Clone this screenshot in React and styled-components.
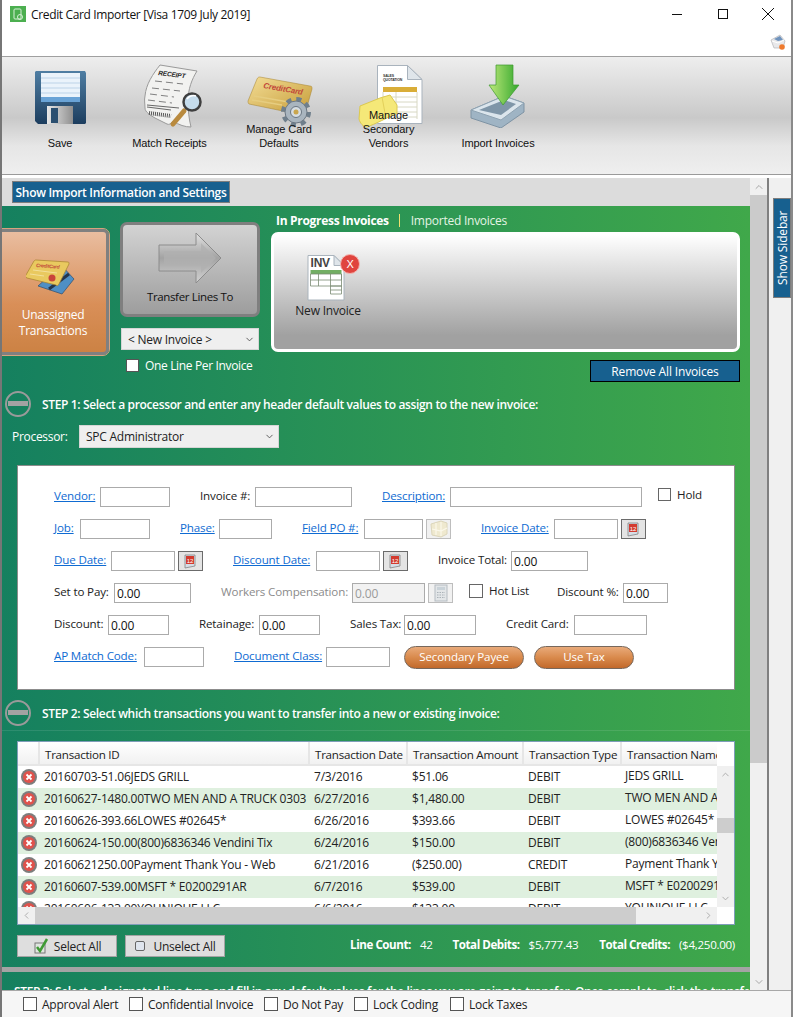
import React from "react";
import styled, { createGlobalStyle } from "styled-components";
import { ChevronUp, ChevronDown, ChevronLeft, ChevronRight } from "lucide-react";

const FONT = `"Open Sans", "Noto Sans", sans-serif`;

const Global = createGlobalStyle`
  html, body { margin: 0; padding: 0; background: #fff; }
  * { box-sizing: border-box; }
`;

const Win = styled.div`
  width: 793px;
  height: 1017px;
  display: flex;
  flex-direction: column;
  overflow: hidden;
  border-left: 2px solid #767676;
  border-right: 2px solid #8a8a8a;
  background: #fff;
  font-family: ${FONT};
  font-size: 11.5px;
  letter-spacing: -0.15px;
  color: #222;
`;

/* title bar */
const TitleBar = styled.div`
  height: 57px;
  flex: none;
  border-bottom: 1px solid #a0a0a0;
  background: #fff;
  display: flex;
  flex-direction: column;
`;
const TitleRow = styled.div`
  display: flex;
  align-items: center;
  height: 28px;
  padding-left: 8px;
`;
const TitleText = styled.div`
  margin-left: 5px;
  font-size: 12px;
  letter-spacing: -0.35px;
  color: #111;
  flex: 1;
`;
const WinBtn = styled.div`
  width: 45.5px;
  height: 28px;
  display: flex;
  align-items: center;
  justify-content: center;
`;
const PrinterRow = styled.div`
  display: flex;
  justify-content: flex-end;
  padding: 6px 5px 0 0;
`;

/* ribbon */
const Ribbon = styled.div`
  height: 118px;
  flex: none;
  padding: 7px 0 0 3px;
  display: flex;
  border-bottom: 1px solid #9a9a9a;
  background: linear-gradient(#eeeeee 0%, #c9c9c9 52%, #e6e6e6 76%, #efefef 100%);
`;
const RibbonItem = styled.div`
  width: 109.5px;
  height: 86px;
  flex: none;
  display: grid;
  justify-items: center;
  & > * { grid-area: 1 / 1; }
`;
const RibbonLabel = styled.div`
  align-self: end;
  text-align: center;
  font-family: "Liberation Sans", Arial, sans-serif;
  font-size: 11px;
  letter-spacing: -0.1px;
  line-height: 14px;
  color: #111;
  position: relative;
  max-width: 84px;
`;

/* body */
const Body = styled.div`
  flex: 1;
  min-height: 0;
  display: flex;
  padding-top: 3px;
  background: #fff;
  overflow: hidden;
`;
const Main = styled.div`
  width: 748px;
  flex: none;
  overflow: hidden;
  display: flex;
  flex-direction: column;
`;
const TopStrip = styled.div`
  height: 28px;
  flex: none;
  background: #dcdcdc;
  padding: 3px 0 0 10px;
`;
const BlueBtn = styled.div`
  display: inline-flex;
  align-items: center;
  justify-content: center;
  height: 22px;
  width: 218px;
  background: #17608f;
  border: 1px solid #7d7d7d;
  color: #fff;
  font-weight: 600;
  font-size: 12px;
  letter-spacing: -0.3px;
  white-space: nowrap;
`;
const Green = styled.div`
  flex: 1;
  min-height: 0;
  overflow: hidden;
  background: linear-gradient(90deg, #15805f 0%, #40a84a 100%);
  color: #fff;
`;

const Top = styled.div`
  height: 185px;
  display: flex;
  align-items: flex-start;
`;
const Tile = styled.div`
  width: 107px;
  height: 126px;
  margin-top: 23px;
  flex: none;
  border: 3px solid #808080;
  border-left: 0;
  border-radius: 0 6px 6px 0;
  outline: 1px solid #d8a27e;
  background: linear-gradient(#e9bda0 0%, #d98f58 60%, #cc8244 100%);
  display: flex;
  flex-direction: column;
  align-items: center;
  padding: 26px 2px 0 0;
  color: #fff;
  font-size: 12px;
  letter-spacing: -0.25px;
  line-height: 16px;
  text-align: center;
`;
const TileLabel = styled.div`
  margin-top: 9px;
`;
const MidCol = styled.div`
  width: 140px;
  margin: 16px 0 0 11px;
  flex: none;
  display: flex;
  flex-direction: column;
  align-items: center;
`;
const Transfer = styled.div`
  width: 140px;
  height: 95px;
  border: 3px solid #7f7f7f;
  border-radius: 7px;
  background: linear-gradient(#d3d3d3, #9d9d9d);
  color: #111;
  font-size: 11.5px;
  letter-spacing: -0.35px;
  display: flex;
  flex-direction: column;
  align-items: center;
  padding-top: 7px;
`;
const TransferLabel = styled.div`
  margin-top: 5px;
`;
const Select = styled.div`
  width: ${(p) => p.$w}px;
  height: ${(p) => p.$h || 22}px;
  margin-top: ${(p) => p.$mt || 0}px;
  flex: none;
  background: #efefef;
  border: 1px solid #d6d6d6;
  color: #222;
  font-size: 12px;
  letter-spacing: -0.25px;
  display: flex;
  align-items: center;
  justify-content: space-between;
  padding: 0 3px 0 6px;
`;
const Check = styled.span`
  display: inline-block;
  width: ${(p) => p.$s || 14}px;
  height: ${(p) => p.$s || 14}px;
  flex: none;
  background: #fff;
  border: 1px solid #555;
`;
const OneLine = styled.div`
  display: flex;
  align-items: center;
  align-self: flex-start;
  gap: 6px;
  margin: 9px 0 0 6px;
  font-size: 12px;
  letter-spacing: -0.35px;
  line-height: 13px;
  color: #fff;
`;
const RightCol = styled.div`
  width: 469px;
  margin-left: 11px;
  flex: none;
  padding-top: 6px;
  display: flex;
  flex-direction: column;
`;
const Tabs = styled.div`
  display: flex;
  align-items: center;
  height: 16px;
  padding-left: 5px;
  font-size: 12px;
`;
const ActiveTab = styled.span`
  font-weight: 700;
  letter-spacing: -0.3px;
`;
const TabSep = styled.span`
  width: 1px;
  height: 13px;
  background: #f0e070;
  margin: 0 11px 0 10px;
`;
const InvoiceTab = styled.span`
  color: #e4f4e4;
  letter-spacing: -0.25px;
`;
const InvoicePanel = styled.div`
  height: 120px;
  margin-top: 4px;
  border: 3px solid #fff;
  border-radius: 7px;
  background: linear-gradient(#ffffff 0%, #a1a1a1 88%);
  padding: 19px 0 0 19px;
  color: #222;
`;
const InvoiceItem = styled.div`
  width: 70px;
  display: flex;
  flex-direction: column;
  align-items: center;
  font-size: 12px;
  letter-spacing: -0.2px;
`;
const InvoiceLabel = styled.div`
  margin-top: 0;
  white-space: nowrap;
`;
const RemoveBtn = styled.div`
  align-self: flex-end;
  width: 150px;
  height: 22px;
  margin-top: 8px;
  background: #17608f;
  border: 1px solid #000;
  color: #fff;
  font-size: 12px;
  display: flex;
  align-items: center;
  justify-content: center;
`;

const Step = styled.div`
  display: flex;
  align-items: center;
  height: 26px;
  padding-left: 2px;
  font-weight: 600;
  font-size: 12px;
  letter-spacing: -0.35px;
  white-space: nowrap;
  color: #fff;
`;
const StepText = styled.div`
  margin-left: 10px;
  padding-top: 1px;
`;
const Processor = styled.div`
  display: flex;
  align-items: center;
  margin-top: 8px;
  padding-left: 10px;
  font-size: 12px;
`;
const ProcLabel = styled.div`
  width: 67px;
  letter-spacing: -0.3px;
`;

/* header form */
const Form = styled.div`
  width: 718px;
  height: 225px;
  margin: 17px 0 10px 15px;
  background: #fff;
  border: 1px solid #8c8c8c;
  color: #222;
  padding: 21px 0 0 36px;
  display: flex;
  flex-direction: column;
  gap: 12px;
`;
const Row = styled.div`
  display: flex;
  align-items: center;
  height: 20px;
  font-size: 11.6px;
`;
const Label = styled.div`
  flex: none;
  width: ${(p) => p.$w}px;
  margin-left: ${(p) => p.$ml ?? 30}px;
  margin-bottom: ${(p) => (p.$up ? 6 : 4)}px;
  white-space: nowrap;
  color: ${(p) => (p.$off ? "#8b8b8b" : "#222")};
  &:first-child { margin-left: 0; }
`;
const LinkLabel = styled(Label)`
  color: #0f6bd2;
  text-decoration: underline;
`;
const Field = styled.input`
  flex: none;
  width: ${(p) => p.$w}px;
  height: 20px;
  margin: 0;
  padding: 0 2px;
  border: 1px solid #ababab;
  border-radius: 0;
  background: ${(p) => (p.disabled ? "#f2f2f2" : "#fff")};
  color: ${(p) => (p.disabled ? "#9a9a9a" : "#111")};
  font: 12px ${FONT};
  letter-spacing: -0.15px;
  outline: none;
`;
const IconBtn = styled.div`
  flex: none;
  width: 25px;
  height: 20px;
  margin-left: 3px;
  display: flex;
  align-items: center;
  justify-content: center;
  background: ${(p) => (p.$off ? "#f1f1f1" : "#e4e4e4")};
  border: 1px solid ${(p) => (p.$off ? "#bdbdbd" : "#6b6b6b")};
`;
const FormCheck = styled(Check)`
  margin-left: ${(p) => p.$ml}px;
  margin-bottom: 5px;
  border-color: #666;
`;
const Pill = styled.div`
  flex: none;
  width: ${(p) => p.$w}px;
  height: 23px;
  margin-left: ${(p) => p.$ml}px;
  padding-bottom: 1px;
  border-radius: 12px;
  border: 1px solid #77685c;
  background: linear-gradient(#e9aa7a 0%, #d98a4c 50%, #c2692b 100%);
  color: #fff;
  font-size: 11.6px;
  display: flex;
  align-items: center;
  justify-content: center;
`;

const StepRule = styled.div`
  height: 1px;
  margin-top: 4px;
  background: rgba(255, 255, 255, 0.1);
`;

/* transactions table */
const Table = styled.div`
  width: 718px;
  height: 184px;
  margin: 10px 0 0 15px;
  background: #fff;
  border: 1px solid #7f9db9;
  color: #222;
  display: flex;
  flex-direction: column;
  font-size: 12px;
  letter-spacing: -0.2px;
`;
const Head = styled.div`
  height: 24px;
  flex: none;
  display: flex;
  font-size: 11.6px;
  letter-spacing: -0.25px;
`;
const HeadCell = styled.div`
  flex: none;
  width: ${(p) => p.$w}px;
  padding: 2px 0 0 5px;
  display: flex;
  align-items: center;
  white-space: nowrap;
  overflow: hidden;
  background: linear-gradient(#ffffff, #f1f1f1);
  border-right: 2px solid #e6e6e6;
  border-bottom: 2px solid #e6e6e6;
  &:last-child { border-right: 0; }
`;
const Mid = styled.div`
  flex: 1;
  min-height: 0;
  display: flex;
`;
const Rows = styled.div`
  width: 699px;
  flex: none;
  overflow: hidden;
`;
const TxRow = styled.div`
  height: 22px;
  display: flex;
  align-items: center;
  white-space: nowrap;
  background: ${(p) => (p.$alt ? "#dff0df" : "#fff")};
`;
const Gutter = styled.div`
  width: 22px;
  flex: none;
  display: flex;
  justify-content: center;
`;
const Cell = styled.div`
  flex: none;
  width: ${(p) => p.$w}px;
  padding-left: ${(p) => (p.$up ? 3 : 4)}px;
  margin-bottom: ${(p) => (p.$up ? 4 : 2)}px;
  overflow: hidden;
`;
const VBar = styled.div`
  width: 17px;
  flex: none;
  background: #f0f0f0;
  display: flex;
  flex-direction: column;
  align-items: center;
  justify-content: space-between;
  padding: 3px 0;
`;
const VSpacer = styled.div`
  align-self: stretch;
  height: 15px;
  margin-top: 38px;
  margin-bottom: auto;
  background: #cdcdcd;
`;
const HBar = styled.div`
  height: 17px;
  flex: none;
  display: flex;
`;
const HTrack = styled.div`
  width: 699px;
  display: flex;
  align-items: center;
  background: #f0f0f0;
`;
const ArrowCap = styled.div`
  width: 17px;
  flex: none;
  height: 17px;
  margin-left: ${(p) => (p.$end ? "auto" : "0")};
  display: flex;
  align-items: center;
  justify-content: center;
`;
const HThumb = styled.div`
  width: 601px;
  height: 17px;
  background: #cdcdcd;
`;
const Corner = styled.div`
  flex: 1;
  background: #fff;
`;

const Footer = styled.div`
  display: flex;
  align-items: center;
  width: 718px;
  height: 22px;
  margin: 10px 0 10px 15px;
`;
const GrayBtn = styled.div`
  width: 100px;
  height: 22px;
  flex: none;
  margin-right: 8px;
  background: #dedede;
  border: 1px solid #a4a4a4;
  color: #222;
  font-size: 12px;
  letter-spacing: -0.25px;
  display: flex;
  align-items: center;
  justify-content: center;
  gap: ${(p) => p.$gap}px;
`;
const Stats = styled.div`
  margin-left: auto;
  display: flex;
  font-size: 11.6px;
  letter-spacing: -0.3px;
  white-space: nowrap;
  margin-bottom: 3px;
`;
const StatLabel = styled.span`
  font-weight: 700;
  letter-spacing: -0.45px;
  margin: 0 9px 0 ${(p) => p.$ml || 0}px;
`;
const GrayBar = styled.div`
  height: 5px;
  background: #a4a4a4;
  margin-bottom: 6px;
`;

/* main scroll bar and side strip */
const MainBar = styled.div`
  width: 17px;
  flex: none;
  display: flex;
  flex-direction: column;
  background: #f0f0f0;
`;
const MainCap = styled.div`
  height: 17px;
  flex: none;
  display: flex;
  align-items: center;
  justify-content: center;
`;
const MainThumb = styled.div`
  height: 568px;
  flex: none;
  background: #cbcbcb;
`;
const MainTrack = styled.div`
  flex: 1;
`;
const Side = styled.div`
  flex: 1;
  border-left: 2px solid #808080;
  background: #f0f0f0;
  padding: 20px 0 0 4px;
`;
const SideBtn = styled.div`
  width: 18px;
  height: 100px;
  background: #17608f;
  border: 1px solid #7d7d7d;
  color: #fff;
  font-size: 12px;
  writing-mode: vertical-rl;
  transform: rotate(180deg);
  display: flex;
  align-items: center;
  justify-content: center;
`;

/* bottom options */
const Bottom = styled.div`
  height: 27px;
  flex: none;
  border-top: 1px solid #a8a8a8;
  background: #f6f6f6;
  display: flex;
  align-items: center;
  padding-left: 21px;
  font-size: 12px;
  letter-spacing: -0.25px;
`;
const BottomOpt = styled.div`
  display: flex;
  align-items: center;
  gap: 5px;
  width: ${(p) => p.$w}px;
  flex: none;
  white-space: nowrap;
`;

/* drawings */
const FloppyIcon = () => (
  <svg width="110" height="64" viewBox="5 64 110 64">
    <defs>
      <linearGradient id="fl" x1="0" y1="0" x2="0" y2="1">
        <stop offset="0" stopColor="#4f7ea3" />
        <stop offset="1" stopColor="#1c3d5e" />
      </linearGradient>
      <linearGradient id="sh" x1="0" y1="0" x2="1" y2="0">
        <stop offset="0" stopColor="#e8e8e8" />
        <stop offset="1" stopColor="#8f8f8f" />
      </linearGradient>
    </defs>
    <path d="M36 71h49l1 2v50l-1 1H38l-3-3V72z" fill="url(#fl)" />
    <rect x="41" y="73" width="39" height="28" fill="#eaf3fb" />
    <path d="M41 78h39M41 83h39M41 88h39M41 93h39" stroke="#bcd3e8" strokeWidth="1" />
    <rect x="41" y="97" width="39" height="5" fill="#69a3d6" />
    <rect x="47" y="106" width="26" height="18" fill="url(#sh)" />
    <rect x="51" y="108" width="7" height="15" fill="#2b4f70" />
  </svg>
);

const ReceiptIcon = () => (
  <svg width="110" height="64" viewBox="115 64 110 64">
    <path d="M160 65l37 6c-5 8-9 18-9 30 0 10 1 18 3 26-6 0-12-2-18-6-2 3-4 4-6 3-4-2-8-4-12-6-5-3-10-6-10-10 0-4-1-8 0-12 1-12 8-22 15-31z" fill="#f2f2f0" stroke="#9a9a9a" />
    <text x="158" y="75" fontFamily="Liberation Sans" fontSize="6.500" fontWeight="700" fontStyle="italic" fill="#222" transform="rotate(7 158 75)">RECEIPT</text>
    <path d="M155 81l28 3M152 88l28 3M150 94l24 3M148 100l24 3" stroke="#808080" strokeWidth="1" strokeDasharray="7 4" />
    <path d="M147 105l32 3M147 107l24 3" stroke="#444" strokeWidth=".8" />
    <path d="M149 113l22 3" stroke="#555" strokeWidth="4" strokeDasharray="1 1" />
    <path d="M173 124l11-13" stroke="#b98a3e" strokeWidth="5" strokeLinecap="round" />
    <circle cx="192" cy="102" r="8.500" fill="#c5dcec" stroke="#3f3f3f" strokeWidth="2.500" />
    <path d="M187 99c2-3 6-4 9-3" stroke="#fff" strokeWidth="1.500" fill="none" />
  </svg>
);

const CardGearIcon = () => (
  <svg width="110" height="64" viewBox="224 64 110 64">
    <defs>
      <linearGradient id="gd" x1="0" y1="0" x2="1" y2="1">
        <stop offset="0" stopColor="#f3dd96" />
        <stop offset="1" stopColor="#c59b36" />
      </linearGradient>
    </defs>
    <path d="M260 77l50 9c2 0 2 1 2 3l-7 25c-1 1-1 1-3 1l-53-11c-1-1-1-2-1-3l9-22c1-2 2-2 3-2z" fill="url(#gd)" stroke="#a5812c" strokeWidth=".5" />
    <text x="263" y="88" fontFamily="Liberation Sans" fontSize="8" fontStyle="italic" fontWeight="700" fill="#c2483a" transform="rotate(10 263 88)">CreditCard</text>
    <path d="M254 96l46 8M252 100l30 5" stroke="#e6cd80" strokeWidth="1.500" />
    <circle cx="296" cy="112" r="12.500" fill="none" stroke="#6f7f8c" strokeWidth="5" strokeDasharray="5 4.800" />
    <circle cx="296" cy="112" r="11" fill="#a9b5bf" stroke="#6b7783" />
    <circle cx="296" cy="112" r="5.500" fill="#d6dde2" stroke="#6b7783" />
    <circle cx="296" cy="112" r="2.500" fill="#c9a64e" />
  </svg>
);

const QuoteIcon = () => (
  <svg width="110" height="64" viewBox="332 64 110 64">
    <path d="M375.500 65.500h30l14.500 14v44h-44.500z" fill="#fff" stroke="#a9b3bd" />
    <path d="M405.500 65.500v14h14.500z" fill="#dfe5ea" stroke="#a9b3bd" />
    <text x="381" y="77" fontFamily="Liberation Sans" fontSize="3.500" fontWeight="700" fill="#333">SALES</text>
    <text x="381" y="81" fontFamily="Liberation Sans" fontSize="3.500" fontWeight="700" fill="#333">QUOTATION</text>
    <rect x="381" y="87" width="34" height="5" fill="#d9ad38" />
    <path d="M381 97h34M381 102h34M381 107h34M381 112h34M381 117h34M394 92v27M381 92v27M415 92v27" stroke="#d8d8c4" strokeWidth="1" />
    <path d="M358 106l20-8 10-3 7 10v8c-10 5-22 11-30 14-4 0-7-4-8-8z" fill="#f5e878" stroke="#dcc94f" />
    <path d="M380 97l3 16" stroke="#e3d05a" />
  </svg>
);

const ImportIcon = () => (
  <svg width="110" height="64" viewBox="442 64 110 64">
    <defs>
      <linearGradient id="ar" x1="0" y1="0" x2="1" y2="0">
        <stop offset="0" stopColor="#bde87a" />
        <stop offset="1" stopColor="#34a82d" />
      </linearGradient>
    </defs>
    <path d="M470 110l33-14 20 7v9l-23 16-30-10z" fill="#9fb4c4" stroke="#7e93a4" />
    <path d="M470 110l30 10 23-17-20-7z" fill="#dbe5ec" stroke="#8fa3b2" />
    <path d="M478 110l25-10 12 4-15 11z" fill="#7f96a8" />
    <path d="M495 65h17v20h6l-16 20-14-20h7z" fill="url(#ar)" stroke="#3c9a2e" strokeWidth=".7" />
  </svg>
);

const AppIcon = () => (
  <svg width="16" height="16" viewBox="0 0 16 16">
    <rect width="16" height="16" fill="#4caf50" />
    <rect x="4" y="3" width="7" height="10" rx="1" fill="none" stroke="#d6f0d6" />
    <circle cx="10" cy="11" r="2.500" fill="none" stroke="#d6f0d6" />
  </svg>
);

const Minimize = () => (
  <svg width="12" height="12" viewBox="0 0 12 12"><path d="M1 6.500h10" stroke="#111" /></svg>
);
const Maximize = () => (
  <svg width="12" height="12" viewBox="0 0 12 12"><rect x="1.500" y="1.500" width="9" height="9" fill="none" stroke="#111" /></svg>
);
const Close = () => (
  <svg width="14" height="14" viewBox="0 0 14 14"><path d="M1 1l12 12M13 1L1 13" stroke="#111" /></svg>
);
const MailIcon = () => (
  <svg width="16" height="16" viewBox="0 0 16 16">
    <path d="M1 6l9-5 5 6-2 7H4z" fill="#e8e8ea" stroke="#b4b4b8" strokeWidth=".7" />
    <path d="M4 5l6-3 3 4-5 1z" fill="#6f93bd" />
    <path d="M2 7l6 2 6-3" fill="none" stroke="#fff" />
    <circle cx="12" cy="13" r="2.800" fill="#ee7a2d" />
  </svg>
);

const CardsIcon = () => (
  <svg width="54" height="40" viewBox="27 258 54 40">
    <path d="M62 265l13 14-12 15-24-8z" fill="#4f8fc4" stroke="#2f4f6f" strokeWidth=".7" />
    <path d="M50 289l20-15" stroke="#24364d" strokeWidth="3" />
    <path d="M37 260l32 2c1 0 1 1 1 2l-10 20c-1 2-2 2-3 1l-29-7c-2-1-2-2-1-3l8-14c1-1 1-1 2-1z" fill="#e9c95f" stroke="#a5812c" strokeWidth=".7" />
    <text x="37" y="267" fontFamily="Liberation Sans" fontSize="5" fontStyle="italic" fontWeight="700" fill="#c2483a" transform="rotate(4 37 267)">CreditCard</text>
    <path d="M34 270l24 3M31 274l14 2" stroke="#f3e09a" />
    <circle cx="53" cy="278" r="3.500" fill="#c9453a" />
  </svg>
);

const BigArrow = () => (
  <svg width="64" height="52" viewBox="0 0 64 52">
    <defs>
      <linearGradient id="ba" x1="0" y1="0" x2="0" y2="1">
        <stop offset="0" stopColor="#e2e2e2" />
        <stop offset=".5" stopColor="#a3a3a3" />
        <stop offset="1" stopColor="#d2d2d2" />
      </linearGradient>
    </defs>
    <path d="M1 13h37V1l25 25-25 25V39H1z" fill="url(#ba)" stroke="#8c8c8c" />
    <path d="M6 19h37v-8l15 15-15 15v-8H6z" fill="#b0b0b0" opacity=".75" />
  </svg>
);

const InvoiceIcon = () => (
  <svg width="66" height="48" viewBox="-9.500 0 66 48">
    <path d="M3.500 1.500h26l10 10v34.500h-36z" fill="#fff" stroke="#aab4bd" />
    <path d="M29.500 1.500v10h10z" fill="#dfe5ea" stroke="#aab4bd" />
    <text x="6" y="13" fontFamily="Liberation Sans" fontSize="12" fontWeight="700" fill="#444">INV</text>
    <rect x="6" y="16" width="31" height="4" fill="#72ae63" />
    <path d="M6 20h31v6h-31zM6 26v6h31M14 20v12M26 20v20h11v-20M26 32h11M26 36h11" fill="none" stroke="#7a8a72" strokeWidth=".8" />
    <circle cx="45.500" cy="10" r="9.500" fill="#e0443e" stroke="#f3b5b0" />
    <text x="45.500" y="14" textAnchor="middle" fontFamily="Liberation Sans" fontSize="11" fill="#fff">X</text>
  </svg>
);

const Collapse = () => (
  <svg width="28" height="28" viewBox="0 0 28 28">
    <circle cx="14" cy="14" r="12" fill="none" stroke="#9a9a9a" strokeWidth="2" />
    <rect x="4" y="11" width="20" height="5" fill="#a2a2a2" />
  </svg>
);

const Calendar = () => (
  <svg width="15" height="15" viewBox="0 0 15 15">
    <path d="M2 1h10v11l-10 2z" fill="#d5dde6" stroke="#777" strokeWidth=".7" />
    <rect x="3" y="2" width="8" height="8" fill="#d33b2f" />
    <text x="7" y="9" textAnchor="middle" fontFamily="Liberation Sans" fontSize="6" fill="#fff">12</text>
  </svg>
);
const Lookup = () => (
  <svg width="18" height="18" viewBox="0 0 18 18">
    <path d="M1 4l10-3 6 2v11l-6 3-9-2z" fill="#efe9cf" stroke="#dcd6bb" />
    <path d="M2 9l9 2 6-3M11 2v14M6 3v12" stroke="#fbf8ea" strokeWidth="1.200" fill="none" />
  </svg>
);
const Calc = () => (
  <svg width="14" height="18" viewBox="0 0 14 18">
    <rect x="1" y="1" width="12" height="16" fill="#e3e6e8" stroke="#b5bcc2" />
    <rect x="3" y="3" width="8" height="3" fill="#c9d2d8" />
    <path d="M3 8.500h8M3 11h8M3 13.500h8" stroke="#aab2b8" strokeDasharray="1.500 1" />
  </svg>
);
const RowX = () => (
  <svg width="16" height="16" viewBox="0 0 16 16">
    <circle cx="8" cy="8" r="8" fill="#7d7d7d" />
    <circle cx="8" cy="8" r="6" fill="#e0524c" />
    <path d="M5.500 5.500l5 5M10.500 5.500l-5 5" stroke="#fff" strokeWidth="1.800" />
  </svg>
);
const CheckMark = () => (
  <svg width="16" height="16" viewBox="0 0 16 16">
    <rect x="2" y="5" width="10" height="10" fill="#dfe6df" stroke="#777" />
    <path d="M4 9l3 4 7-12" fill="none" stroke="#3f9a35" strokeWidth="2.500" />
  </svg>
);
const EmptyBox = () => (
  <svg width="12" height="12" viewBox="0 0 12 12">
    <rect x="1.500" y="1.500" width="9" height="9" rx="1.500" fill="#dfe5ee" stroke="#666" />
  </svg>
);

const COLS = [98, 116, 98, 95];
const rows = [
  ["20160703-51.06JEDS GRILL", "7/3/2016", "$51.06", "DEBIT", "JEDS GRILL"],
  ["20160627-1480.00TWO MEN AND A TRUCK 0303", "6/27/2016", "$1,480.00", "DEBIT", "TWO MEN AND A TRUCK"],
  ["20160626-393.66LOWES #02645*", "6/26/2016", "$393.66", "DEBIT", "LOWES #02645*"],
  ["20160624-150.00(800)6836346 Vendini Tix", "6/24/2016", "$150.00", "DEBIT", "(800)6836346 Vendini Tix"],
  ["20160621250.00Payment Thank You - Web", "6/21/2016", "($250.00)", "CREDIT", "Payment Thank You - Web"],
  ["20160607-539.00MSFT * E0200291AR", "6/7/2016", "$539.00", "DEBIT", "MSFT * E0200291AR"],
  ["20160606-133.00YOUNIQUE LLC", "6/6/2016", "$133.00", "DEBIT", "YOUNIQUE LLC"],
];
const ribbon = [
  { label: "Save", Icon: FloppyIcon },
  { label: "Match Receipts", Icon: ReceiptIcon },
  { label: "Manage Card Defaults", Icon: CardGearIcon },
  { label: "Manage Secondary Vendors", Icon: QuoteIcon },
  { label: "Import Invoices", Icon: ImportIcon },
];
const options = [
  ["Approval Alert", 106],
  ["Confidential Invoice", 135],
  ["Do Not Pay", 90],
  ["Lock Coding", 96],
  ["Lock Taxes", 90],
];

export default function App() {
  return (
    <>
      <Global />
      <Win>
        <TitleBar>
          <TitleRow>
            <AppIcon />
            <TitleText>Credit Card Importer [Visa 1709 July 2019]</TitleText>
            <WinBtn><Minimize /></WinBtn>
            <WinBtn><Maximize /></WinBtn>
            <WinBtn><Close /></WinBtn>
          </TitleRow>
          <PrinterRow><MailIcon /></PrinterRow>
        </TitleBar>

        <Ribbon>
          {ribbon.map(({ label, Icon }) => (
            <RibbonItem key={label}>
              <Icon />
              <RibbonLabel>{label}</RibbonLabel>
            </RibbonItem>
          ))}
        </Ribbon>

        <Body>
          <Main>
            <TopStrip><BlueBtn>Show Import Information and Settings</BlueBtn></TopStrip>
            <Green>
              <Top>
                <Tile>
                  <CardsIcon />
                  <TileLabel>Unassigned<br />Transactions</TileLabel>
                </Tile>
                <MidCol>
                  <Transfer>
                    <BigArrow />
                    <TransferLabel>Transfer Lines To</TransferLabel>
                  </Transfer>
                  <Select $w={138} $mt={11}>
                    &lt; New Invoice &gt;
                    <ChevronDown size={11} color="#555" />
                  </Select>
                  <OneLine><Check $s={13} />One Line Per Invoice</OneLine>
                </MidCol>
                <RightCol>
                  <Tabs>
                    <ActiveTab>In Progress Invoices</ActiveTab>
                    <TabSep />
                    <InvoiceTab>Imported Invoices</InvoiceTab>
                  </Tabs>
                  <InvoicePanel>
                    <InvoiceItem>
                      <InvoiceIcon />
                      <InvoiceLabel>New Invoice</InvoiceLabel>
                    </InvoiceItem>
                  </InvoicePanel>
                  <RemoveBtn>Remove All Invoices</RemoveBtn>
                </RightCol>
              </Top>

              <Step>
                <Collapse />
                <StepText>STEP 1: Select a processor and enter any header default values to assign to the new invoice:</StepText>
              </Step>
              <Processor>
                <ProcLabel>Processor:</ProcLabel>
                <Select $w={200} $h={23}>
                  SPC Administrator
                  <ChevronDown size={11} color="#555" />
                </Select>
              </Processor>

              <Form>
                <Row>
                  <LinkLabel $w={46}>Vendor:</LinkLabel><Field $w={70} />
                  <Label $w={55}>Invoice #:</Label><Field $w={97} />
                  <LinkLabel $w={68}>Description:</LinkLabel><Field $w={192} />
                  <FormCheck $ml={16} $s={13} /><Label $w={40} $ml={6} $up>Hold</Label>
                </Row>
                <Row>
                  <LinkLabel $w={26}>Job:</LinkLabel><Field $w={70} />
                  <LinkLabel $w={39}>Phase:</LinkLabel><Field $w={53} />
                  <LinkLabel $w={62}>Field PO #:</LinkLabel><Field $w={59} />
                  <IconBtn $off><Lookup /></IconBtn>
                  <LinkLabel $w={73}>Invoice Date:</LinkLabel><Field $w={64} />
                  <IconBtn><Calendar /></IconBtn>
                </Row>
                <Row>
                  <LinkLabel $w={57}>Due Date:</LinkLabel><Field $w={64} />
                  <IconBtn><Calendar /></IconBtn>
                  <LinkLabel $w={83}>Discount Date:</LinkLabel><Field $w={64} />
                  <IconBtn><Calendar /></IconBtn>
                  <Label $w={73}>Invoice Total:</Label><Field $w={77} defaultValue="0.00" />
                </Row>
                <Row>
                  <Label $w={60}>Set to Pay:</Label><Field $w={77} defaultValue="0.00" />
                  <Label $w={131} $off>Workers Compensation:</Label><Field $w={73} disabled defaultValue="0.00" />
                  <IconBtn $off><Calc /></IconBtn>
                  <FormCheck $ml={16} /><Label $w={38} $ml={6} $up>Hot List</Label>
                  <Label $w={66}>Discount %:</Label><Field $w={45} defaultValue="0.00" />
                </Row>
                <Row>
                  <Label $w={54}>Discount:</Label><Field $w={61} defaultValue="0.00" />
                  <Label $w={60}>Retainage:</Label><Field $w={61} defaultValue="0.00" />
                  <Label $w={54}>Sales Tax:</Label><Field $w={72} defaultValue="0.00" />
                  <Label $w={68}>Credit Card:</Label><Field $w={73} />
                </Row>
                <Row>
                  <LinkLabel $w={90}>AP Match Code:</LinkLabel><Field $w={60} />
                  <LinkLabel $w={92}>Document Class:</LinkLabel><Field $w={64} />
                  <Pill $w={120} $ml={14}>Secondary Payee</Pill>
                  <Pill $w={100} $ml={10}>Use Tax</Pill>
                </Row>
              </Form>

              <Step>
                <Collapse />
                <StepText>STEP 2: Select which transactions you want to transfer into a new or existing invoice:</StepText>
              </Step>
              <StepRule />

              <Table>
                <Head>
                  <HeadCell $w={22} />
                  <HeadCell $w={270}>Transaction ID</HeadCell>
                  <HeadCell $w={98}>Transaction Date</HeadCell>
                  <HeadCell $w={116}>Transaction Amount</HeadCell>
                  <HeadCell $w={98}>Transaction Type</HeadCell>
                  <HeadCell $w={95}>Transaction Name</HeadCell>
                </Head>
                <Mid>
                  <Rows>
                    {rows.map((r, i) => (
                      <TxRow key={r[0]} $alt={i % 2 === 1}>
                        <Gutter><RowX /></Gutter>
                        <Cell $w={270}>{r[0]}</Cell>
                        {r.slice(1).map((v, j) => (
                          <Cell key={j} $w={COLS[j]} $up={j === 3}>{v}</Cell>
                        ))}
                      </TxRow>
                    ))}
                  </Rows>
                  <VBar>
                    <ChevronUp size={11} color="#a8a8a8" />
                    <VSpacer />
                    <ChevronDown size={11} color="#a8a8a8" />
                  </VBar>
                </Mid>
                <HBar>
                  <HTrack>
                    <ArrowCap><ChevronLeft size={11} color="#a8a8a8" /></ArrowCap>
                    <HThumb />
                    <ArrowCap $end><ChevronRight size={11} color="#a8a8a8" /></ArrowCap>
                  </HTrack>
                  <Corner />
                </HBar>
              </Table>

              <Footer>
                <GrayBtn $gap={5}><CheckMark />Select All</GrayBtn>
                <GrayBtn $gap={7}><EmptyBox />Unselect All</GrayBtn>
                <Stats>
                  <StatLabel>Line Count:</StatLabel>42
                  <StatLabel $ml={20}>Total Debits:</StatLabel>$5,777.43
                  <StatLabel $ml={21}>Total Credits:</StatLabel>($4,250.00)
                </Stats>
              </Footer>
              <GrayBar />
              <Step>
                <Collapse />
                <StepText>STEP 3: Select a designated line type and fill in any default values for the lines you are going to transfer. Once complete, click the transfer button.</StepText>
              </Step>
            </Green>
          </Main>
          <MainBar>
            <MainCap><ChevronUp size={12} color="#a8a8a8" /></MainCap>
            <MainThumb />
            <MainTrack />
            <MainCap><ChevronDown size={12} color="#a8a8a8" /></MainCap>
          </MainBar>
          <Side><SideBtn>Show Sidebar</SideBtn></Side>
        </Body>

        <Bottom>
          {options.map(([label, w]) => (
            <BottomOpt key={label} $w={w}><Check />{label}</BottomOpt>
          ))}
        </Bottom>
      </Win>
    </>
  );
}
